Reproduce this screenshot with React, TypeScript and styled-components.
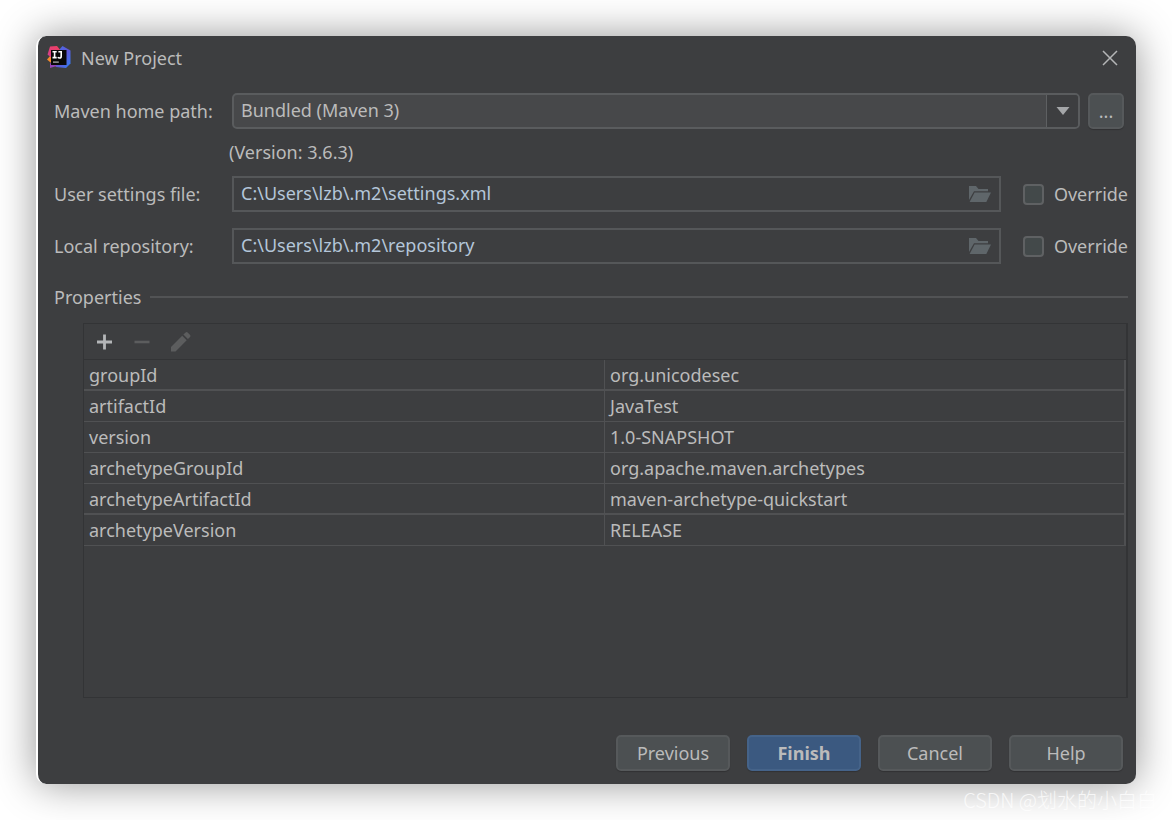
import React from "react";
import styled, { createGlobalStyle, css } from "styled-components";

const GlobalStyle = createGlobalStyle`
  *, *::before, *::after { box-sizing: border-box; }
  body {
    margin: 0;
    background: #ffffff;
    font-family: "Noto Sans", "Noto Sans CJK SC", sans-serif;
    font-size: 18px;
    line-height: 24px;
    color: #bbbbbb;
  }
  button, input, select { font: inherit; color: inherit; margin: 0; }
`;

const Page = styled.div`
  position: relative;
  display: flex;
  min-height: 100vh;
  padding: 36px;
  overflow: hidden;
`;

const Dialog = styled.main`
  flex: 1;
  min-width: 0;
  display: flex;
  flex-direction: column;
  background: #3d3e40;
  border-left: 2px solid #ffffff;
  border-radius: 10px;
  box-shadow: 0 0 40px rgba(0, 0, 0, 0.42);
`;

const TitleBar = styled.header`
  display: flex;
  align-items: center;
  gap: 10px;
  height: 44px;
  padding: 0 16px 0 9px;
`;

const Title = styled.h1`
  flex: 1;
  margin: 0;
  font-size: 18px;
  font-weight: 400;
`;

const CloseButton = styled.button`
  display: flex;
  padding: 0;
  border: 0;
  background: none;
`;

const Form = styled.form`
  flex: 1;
  display: flex;
  flex-direction: column;
  padding: 13px 8px 13px 16px;
`;

const Row = styled.div`
  display: flex;
  align-items: center;
  height: 36px;
`;

const FieldRow = styled(Row)`
  margin-bottom: 16px;
`;

const Label = styled.label`
  width: 178px;
  flex: none;
  white-space: nowrap;
`;

const Note = styled.p`
  margin: 11px 0 12px 175px;
`;

const ComboBox = styled.div`
  flex: 1;
  display: grid;
  height: 36px;
  margin-right: 8px;
`;

const Select = styled.select`
  grid-area: 1 / 1;
  appearance: none;
  width: 100%;
  padding: 0 40px 2px 7px;
  border: 2px solid #5a5c5e;
  border-radius: 5px;
  background: #47484a;
`;

const ComboArrow = styled.span`
  grid-area: 1 / 1;
  justify-self: end;
  display: flex;
  align-items: center;
  justify-content: center;
  width: 32px;
  margin: 2px;
  border-left: 1px solid #5e6062;
  border-radius: 0 3px 3px 0;
  background: #3d3e40;
  pointer-events: none;
`;

const PathBox = styled.div`
  flex: 1;
  display: flex;
  align-items: center;
  height: 36px;
  padding-right: 7px;
  border: 2px solid #555759;
`;

const PathInput = styled.input`
  flex: 1;
  min-width: 0;
  padding: 0 0 2px 7px;
  border: 0;
  outline: 0;
  background: none;
  color: #b4c6d9;
`;

const Override = styled.label`
  display: flex;
  align-items: center;
  gap: 10px;
  margin-left: 22px;
`;

const CheckBox = styled.input`
  appearance: none;
  width: 21px;
  height: 21px;
  border: 2px solid #5f6163;
  border-radius: 4px;
  background: #43494a;
`;

const buttonFace = css`
  border: 2px solid #56595b;
  border-radius: 5px;
  background: #4c5052;
  box-shadow: 0 1px 1px rgba(0, 0, 0, 0.2);
`;

const MoreButton = styled.button`
  ${buttonFace}
  width: 36px;
  height: 36px;
  margin-right: 4px;
  padding: 0;
`;

const SectionTitle = styled.h2`
  display: flex;
  align-items: center;
  gap: 9px;
  margin: 5px 0 14px;
  font-size: 18px;
  font-weight: 400;

  &::after {
    content: "";
    flex: 1;
    height: 2px;
    background: #525355;
  }
`;

const TablePanel = styled.section`
  flex: 1;
  margin-left: 29px;
  border: 1px solid #333436;
  border-width: 1px 2px 1px 1px;
`;

const Toolbar = styled.div`
  display: flex;
  align-items: center;
  height: 36px;
  padding-left: 9px;
  gap: 14px;
  border-bottom: 1px solid #333436;
`;

const ToolButton = styled.button`
  display: flex;
  padding: 0;
  border: 0;
  background: none;
`;

const Table = styled.table`
  width: 100%;
  table-layout: fixed;
  border-collapse: separate;
  border-spacing: 0;
  border-right: 2px solid #4e4f51;
`;

const Cell = styled.td<{ $heavy: boolean }>`
  height: 31px;
  padding: 0 5px;
  border-bottom: ${(p) => (p.$heavy ? 2 : 1)}px solid #505153;

  & + & { border-left: 1px solid #505153; }
`;

const Footer = styled.footer`
  display: flex;
  justify-content: flex-end;
  gap: 17px;
  margin: 37px 5px 0 0;
`;

const Button = styled.button<{ $primary?: boolean }>`
  ${buttonFace}
  width: 114px;
  height: 36px;
  padding: 0;
  ${(p) =>
    p.$primary &&
    css`
      border-color: #456389;
      background: #3b5980;
      font-weight: 700;
    `}
`;

const Watermark = styled.div`
  position: absolute;
  right: 15px;
  bottom: 8px;
  font-family: "Noto Sans CJK SC", sans-serif;
  font-size: 20px;
  font-weight: 300;
  color: rgba(255, 255, 255, 0.75);
  white-space: nowrap;
`;

const Logo = () => (
  <svg width="24" height="24" viewBox="0 0 24 24" aria-hidden="true">
    <defs>
      <linearGradient id="blue" x1="0" y1="0" x2="1" y2="1">
        <stop offset="0" stopColor="#3f72e8" />
        <stop offset="0.5" stopColor="#6257d8" />
        <stop offset="1" stopColor="#2f7ff0" />
      </linearGradient>
      <linearGradient id="red" x1="1" y1="0" x2="0" y2="1">
        <stop offset="0" stopColor="#f0405c" />
        <stop offset="0.6" stopColor="#e33f7c" />
        <stop offset="1" stopColor="#c63fa0" />
      </linearGradient>
    </defs>
    <path d="M3 18 L6 13 L14 21 L8 20.5 L3 22 Z" fill="#9443b8" />
    <path d="M12 4 L15.5 0 L23.5 4.5 L23.5 17.5 L19 22 L9 21 Z" fill="url(#blue)" />
    <path d="M0 13.5 L3.5 9.5 L7 18 L3.5 16.5 Z" fill="#f58a2c" />
    <path d="M3 0.5 L10 0 L14 5 L7 14 L0.5 8.5 Z" fill="url(#red)" />
    <rect x="4" y="4" width="15.5" height="15" fill="#090909" />
    <path
      d="M5.5 5.8 H9.7 M7.6 5.8 V11.6 M5.5 11.6 H9.7 M11.4 5.8 H14.2 V10.2 Q14.2 12 12.6 12 Q11.4 12 10.8 11.2"
      fill="none"
      stroke="#ffffff"
      strokeWidth="1.6"
    />
    <rect x="6" y="15.5" width="5.8" height="1.2" fill="#bbbbbb" />
  </svg>
);

const CloseIcon = () => (
  <svg width="20" height="20" viewBox="0 0 20 20" aria-hidden="true">
    <path d="M3 3 L17 17 M17 3 L3 17" stroke="#b4b5b6" strokeWidth="1.5" />
  </svg>
);

const FolderIcon = () => (
  <svg width="24" height="18" viewBox="0 0 24 18" aria-hidden="true">
    <path d="M1 1 H8 L10.5 4 H20 V6.2 H6 L1 15 Z" fill="#5f666a" />
    <path d="M6.6 7.4 H23 L18.3 17 H1.6 Z" fill="#5f666a" />
  </svg>
);

const PlusIcon = () => (
  <svg width="24" height="24" viewBox="0 0 24 24" aria-hidden="true">
    <path d="M4 12 H19 M11.5 4.5 V19.5" stroke="#b4b6b8" strokeWidth="2.8" />
  </svg>
);

const MinusIcon = () => (
  <svg width="24" height="24" viewBox="0 0 24 24" aria-hidden="true">
    <path d="M3.5 12 H18.5" stroke="#5c5d5e" strokeWidth="2.6" />
  </svg>
);

const PencilIcon = () => (
  <svg width="24" height="24" viewBox="0 0 24 24" aria-hidden="true">
    <path d="M2 21.5 V17 L13.2 5.8 L17.7 10.3 L6.5 21.5 Z" fill="#5c5d5e" />
    <path
      d="M14.4 4.6 L16.6 2.4 Q17.6 1.6 18.6 2.4 L21.1 4.9 Q21.9 5.9 21.1 6.9 L18.9 9.1 Z"
      fill="#5c5d5e"
    />
  </svg>
);

const properties = [
  { name: "groupId", value: "org.unicodesec", heavy: true },
  { name: "artifactId", value: "JavaTest", heavy: false },
  { name: "version", value: "1.0-SNAPSHOT", heavy: false },
  { name: "archetypeGroupId", value: "org.apache.maven.archetypes", heavy: false },
  { name: "archetypeArtifactId", value: "maven-archetype-quickstart", heavy: true },
  { name: "archetypeVersion", value: "RELEASE", heavy: false },
];

const PathField = ({ id, label, path }: { id: string; label: string; path: string }) => (
  <FieldRow>
    <Label htmlFor={id}>{label}</Label>
    <PathBox>
      <PathInput id={id} type="text" defaultValue={path} />
      <ToolButton type="button" aria-label="Browse">
        <FolderIcon />
      </ToolButton>
    </PathBox>
    <Override>
      <CheckBox type="checkbox" />
      Override
    </Override>
  </FieldRow>
);

export default function App() {
  return (
    <Page>
      <GlobalStyle />
      <Dialog>
        <TitleBar>
          <Logo />
          <Title>New Project</Title>
          <CloseButton type="button" aria-label="Close">
            <CloseIcon />
          </CloseButton>
        </TitleBar>
        <Form onSubmit={(e) => e.preventDefault()}>
          <Row>
            <Label htmlFor="maven-home">Maven home path:</Label>
            <ComboBox>
              <Select id="maven-home">
                <option>Bundled (Maven 3)</option>
              </Select>
              <ComboArrow>
                <svg width="14" height="8" viewBox="0 0 14 8" aria-hidden="true">
                  <path d="M0.5 0 H13.5 L7 8 Z" fill="#a4a6a8" />
                </svg>
              </ComboArrow>
            </ComboBox>
            <MoreButton type="button">...</MoreButton>
          </Row>
          <Note>(Version: 3.6.3)</Note>
          <PathField id="settings" label="User settings file:" path={"C:\\Users\\lzb\\.m2\\settings.xml"} />
          <PathField id="repository" label="Local repository:" path={"C:\\Users\\lzb\\.m2\\repository"} />
          <SectionTitle>Properties</SectionTitle>
          <TablePanel>
            <Toolbar>
              <ToolButton type="button" aria-label="Add">
                <PlusIcon />
              </ToolButton>
              <ToolButton type="button" aria-label="Remove" disabled>
                <MinusIcon />
              </ToolButton>
              <ToolButton type="button" aria-label="Edit" disabled>
                <PencilIcon />
              </ToolButton>
            </Toolbar>
            <Table>
              <tbody>
                {properties.map((p) => (
                  <tr key={p.name}>
                    <Cell $heavy={p.heavy}>{p.name}</Cell>
                    <Cell $heavy={p.heavy}>{p.value}</Cell>
                  </tr>
                ))}
              </tbody>
            </Table>
          </TablePanel>
          <Footer>
            <Button type="button">Previous</Button>
            <Button type="submit" $primary>
              Finish
            </Button>
            <Button type="button">Cancel</Button>
            <Button type="button">Help</Button>
          </Footer>
        </Form>
      </Dialog>
      <Watermark>CSDN @划水的小白白</Watermark>
    </Page>
  );
}
